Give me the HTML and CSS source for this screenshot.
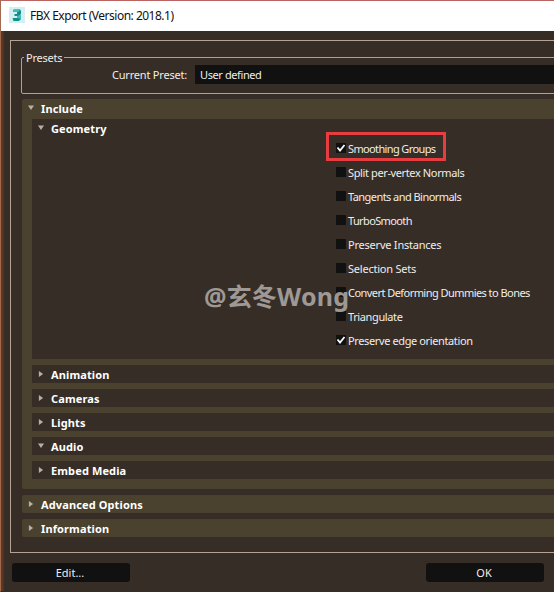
FILE: index.html
```
<!DOCTYPE html>
<html lang="en">
<head>
<meta charset="utf-8">
<title>FBX Export</title>
<link rel="stylesheet" href="styles.css">
</head>
<body>
<div class="window">
  <header class="titlebar">
    <svg class="logo" width="16" height="16" viewBox="0 0 16 16"><rect width="16" height="16" fill="#d3eff0"/><path d="M4.5 2.5H11L12 4v3l-1 1 1 1v3l-2 2H4.5L3.5 11H8V9H5.5V7H8V5H4z" fill="#128c8d"/><path d="M5 2.5h6L9.5 5H4zM8 9l3-1 1 1v3L8 11z" fill="#43bcb9"/></svg>
    <span class="title">FBX Export (Version: 2018.1)</span>
  </header>
  <main class="panel">
    <section class="presets">
      <span class="legend">Presets</span>
      <span class="preset-label">Current Preset:</span>
      <div class="combo">User defined</div>
    </section>
    <section class="group include">
      <h2 class="head"><i class="arrow down"></i>Include</h2>
      <div class="sub geometry">
        <h3 class="head"><i class="arrow down"></i>Geometry</h3>
        <ul class="options">
          <li class="highlight tighter"><i class="box"><svg viewBox="0 0 10 10"><path d="M1.5 4.5 4 7.5 8.5 2"/></svg></i>Smoothing Groups</li>
          <li><i class="box"></i>Split per-vertex Normals</li>
          <li class="tight"><i class="box"></i>Tangents and Binormals</li>
          <li class="tighter"><i class="box"></i>TurboSmooth</li>
          <li class="loose"><i class="box"></i>Preserve Instances</li>
          <li class="loose"><i class="box"></i>Selection Sets</li>
          <li class="tight"><i class="box"></i>Convert Deforming Dummies to Bones</li>
          <li><i class="box"></i>Triangulate</li>
          <li><i class="box"><svg viewBox="0 0 10 10"><path d="M1.5 4.5 4 7.5 8.5 2"/></svg></i>Preserve edge orientation</li>
        </ul>
      </div>
      <h3 class="sub head"><i class="arrow"></i>Animation</h3>
      <h3 class="sub head"><i class="arrow"></i>Cameras</h3>
      <h3 class="sub head"><i class="arrow"></i>Lights</h3>
      <h3 class="sub head"><i class="arrow down"></i>Audio</h3>
      <h3 class="sub head"><i class="arrow"></i>Embed Media</h3>
    </section>
    <h2 class="group head"><i class="arrow"></i>Advanced Options</h2>
    <h2 class="group head"><i class="arrow"></i>Information</h2>
  </main>
  <footer class="actions"><button>Edit...</button><button>OK</button></footer>
  <div class="watermark">@玄冬Wong</div>
</div>
</body>
</html>
```
FILE: styles.css
```
*, *::before { box-sizing: border-box; }
body { margin: 0; overflow: hidden; font: 11px/18px "Noto Sans", "Liberation Sans", sans-serif; color: #f0eeeb; }
h2, h3, ul { margin: 0; padding: 0; font-size: inherit; }
.window { position: relative; width: 554px; height: 592px; background: linear-gradient(90deg, #5a3924 0 2px, #362d27 3px); border-left: 1px solid #a4684f; border-top: 1px solid #b96461; border-bottom: 1px solid #432522; overflow: hidden; }
.titlebar { height: 30px; display: flex; align-items: center; gap: 5px; padding: 0 0 2px 8px; background: #fff; color: #111; }
.title { font-size: 12px; letter-spacing: -.5px; padding-top: 2px; }
.panel { width: 560px; height: 513px; margin: 9px 0 0 9px; padding: 16px 0 0 11px; border: 1px solid #b5a494; }
.presets { position: relative; display: flex; height: 37px; border: 1px solid #b5a089; border-radius: 2px; padding-top: 7px; margin-left: -1px; }
.legend { position: absolute; left: 2px; top: -9px; padding: 0 2px; background: #362d27; letter-spacing: -.25px; }
.preset-label { width: 173px; padding-right: 8px; text-align: right; line-height: 20px; letter-spacing: -.2px; }
.combo { flex: 1; height: 19px; padding-left: 5px; background: #111; line-height: 20px; letter-spacing: -.4px; }
.group { background: #4a412e; border-radius: 2px 0 0 2px; }
.group.include { height: 390px; margin: 5px 0 6px; padding: 1px 0 0 10px; }
.head { display: flex; align-items: center; height: 18px; padding: 2px 0 0 6px; font-size: 11px; font-weight: 700; letter-spacing: .12px; color: #fff; }
.include > h2 { height: 19px; margin-left: -10px; padding-top: 0; padding-bottom: 1px; }
.geometry > h3 { padding-top: 0; }
.group.head { margin-bottom: 6px; }
.sub { background: #362d27; margin-bottom: 6px; }
.geometry { height: 240px; padding-top: 1px; }
.arrow { width: 6px; height: 6px; margin: -2px 7px 0 0; background: #b7b0a8; clip-path: polygon(15% 0, 85% 50%, 15% 100%); }
.arrow.down { clip-path: polygon(0 10%, 100% 10%, 50% 85%); }
.options { list-style: none; margin-top: -1px; padding: 0 0 0 304px; }
.options li { display: flex; align-items: center; height: 24px; letter-spacing: -.38px; }
.options .tight { letter-spacing: -.55px; }
.options .tighter { letter-spacing: -.63px; }
.options .loose { letter-spacing: -.22px; }
.options .highlight { position: relative; margin-top: -1px; }
.highlight::before { content: ""; position: absolute; left: -10px; top: -5px; width: 120px; height: 29px; border: 3px solid #e83d40; }
.box { width: 10px; height: 10px; margin: -2px 2px 0 0; background: #111; }
.box svg { display: block; fill: none; stroke: #fff; stroke-width: 1.8; }
.actions { display: flex; gap: 296px; padding: 10px 0 0 11px; }
button { width: 118px; height: 19px; padding: 0; border: 0; border-radius: 3px; background: #111; color: #f0eeeb; font: inherit; }
.actions button:last-child { padding-right: 2px; }
.actions button:first-child { padding-right: 2px; }
.watermark { position: absolute; left: 203px; top: 278px; font: 700 25px/34px "Noto Sans", "Noto Sans CJK SC", sans-serif; letter-spacing: .2px; color: #aaa5a1; opacity: .9; white-space: nowrap; }
```
